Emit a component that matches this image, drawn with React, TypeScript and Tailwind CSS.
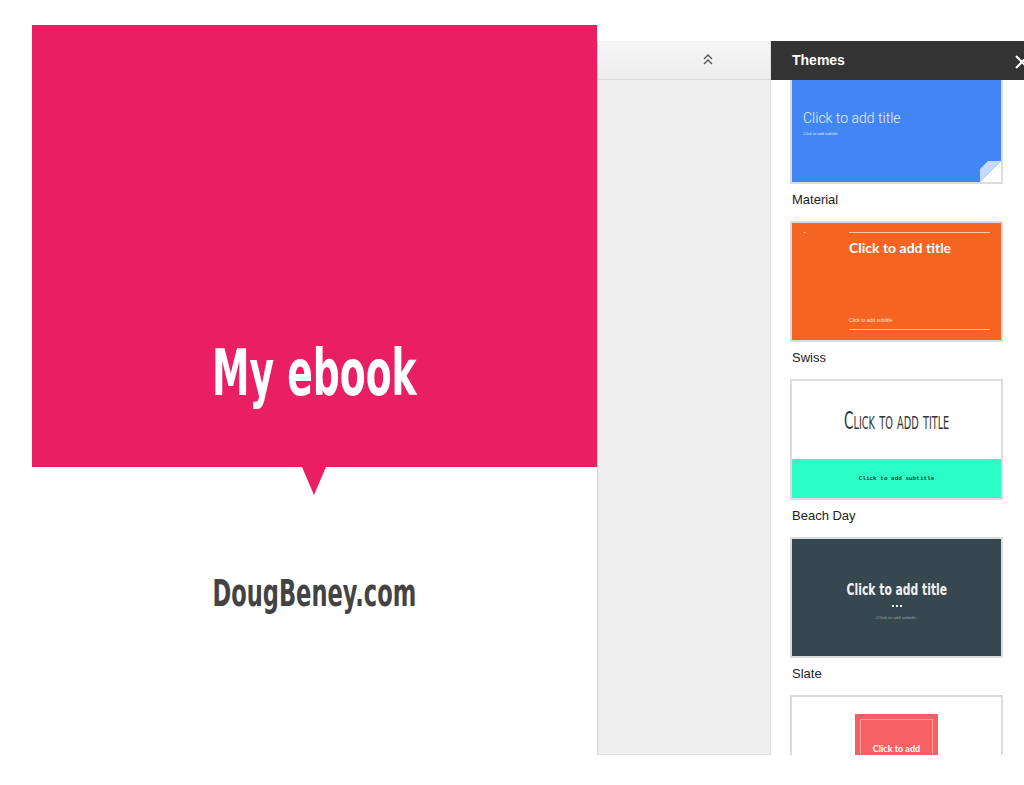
import React from "react";

const narrow = '"Liberation Sans Narrow", "DejaVu Sans Condensed", "Liberation Sans", sans-serif';

interface ThemeItemProps {
  name: string;
  children: React.ReactNode;
}

// Kartu tema: gambar kecil + nama
const ThemeItem: React.FC<ThemeItemProps> = ({ name, children }) => (
  <div className="w-[213px]">
    <div className="h-[121px] border-2 border-[#dcdcdc] overflow-hidden">{children}</div>
    <div className="h-[37px] pt-[8px] pl-[2px] text-[13px] leading-[16px] text-[#222]">{name}</div>
  </div>
);

const App: React.FC = () => {
  return (
    <div className="w-[1024px] h-[785px] bg-white flex overflow-hidden" style={{ fontFamily: '"Liberation Sans", Arial, sans-serif' }}>
      {/* Slide */}
      <div className="w-[597px] shrink-0 pl-[32px] pt-[25px]">
        <div className="h-[442px] bg-[#e91e63] flex justify-center pt-[316px]">
          <h1
            className="text-white text-[64px] leading-[64px] font-bold scale-x-[0.655] whitespace-nowrap"
            style={{ fontFamily: narrow }}
          >
            My ebook
          </h1>
        </div>
        <div className="flex justify-center">
          <svg width="24" height="28" viewBox="0 0 24 28" className="-ml-[2px]">
            <polygon points="0,0 24,0 12,28" fill="#e91e63" />
          </svg>
        </div>
        <div className="flex justify-center pt-[78px]">
          <div
            className="text-[#434343] text-[38px] leading-[40px] font-bold scale-x-[0.66] whitespace-nowrap"
            style={{ fontFamily: narrow }}
          >
            DougBeney.com
          </div>
        </div>
      </div>

      {/* Right side panels */}
      <div className="mt-[41px] h-[714px] flex shrink-0">
        {/* Gray filmstrip panel */}
        <div className="w-[173px] border-l border-[#d4d4d4] border-b border-b-[#e2e2e2] bg-[#eeeeee] flex flex-col">
          <div className="h-[39px] bg-gradient-to-b from-[#f6f6f6] to-[#ededed] border-b border-[#dadada] flex items-center justify-center pl-[48px]">
            <svg width="12" height="14" viewBox="0 0 12 14" fill="none" stroke="#555" strokeWidth="1.4">
              <polyline points="2,6 6,2 10,6" />
              <polyline points="2,11 6,7 10,11" />
            </svg>
          </div>
        </div>

        {/* Themes panel */}
        <div className="w-[254px] border-l border-[#e0e0e0] bg-white flex flex-col">
          <div className="h-[39px] bg-[#333333] flex items-center pl-[21px] justify-between">
            <span className="text-white font-bold text-[14px]">Themes</span>
            <svg width="16" height="16" viewBox="0 0 16 16" className="-mr-[6px] mt-[3px]" stroke="white" strokeWidth="2.2">
              <line x1="2" y1="2" x2="14" y2="14" />
              <line x1="14" y1="2" x2="2" y2="14" />
            </svg>
          </div>
          <div className="flex-1 overflow-hidden">
            <div className="-mt-[17px] pl-[19px]">
              <ThemeItem name="Material">
                <div className="relative h-full bg-[#4285f4] pl-[11px] pt-[45px]">
                  <div className="text-[#e8f0fe] text-[14px] leading-[16px]" style={{ fontFamily: "Roboto, sans-serif", fontWeight: 300 }}>
                    Click to add title
                  </div>
                  <div className="text-[#dfe9fd] text-[4px] leading-[6px] mt-[5px]">Click to add subtitle</div>
                  <svg width="21" height="21" viewBox="0 0 21 21" className="absolute right-0 bottom-0">
                    <polygon points="0,21 21,0 21,21" fill="#ffffff" />
                    <polygon points="0,21 21,0 8,0 0,8" fill="#c5d9fb" />
                  </svg>
                </div>
              </ThemeItem>
              <ThemeItem name="Swiss">
                <div className="h-full bg-[#f46524] flex">
                  <div className="w-[57px] pl-[11px] pt-[9px]">
                    <div className="w-[3px] h-[1px] bg-[#f9b08c]" />
                  </div>
                  <div className="flex-1 pr-[11px] pt-[9px] flex flex-col">
                    <div className="h-[1px] bg-[#f9c2a6]" />
                    <div className="text-white text-[14px] leading-[16px] font-bold mt-[7px]" style={{ fontFamily: "Lato, sans-serif" }}>
                      Click to add title
                    </div>
                    <div className="flex-1" />
                    <div className="text-[#fde0d0] text-[5px] leading-[6px]">Click to add subtitle</div>
                    <div className="h-[1px] bg-[#f9c2a6] mt-[6px] mb-[10px]" />
                  </div>
                </div>
              </ThemeItem>
              <ThemeItem name="Beach Day">
                <div className="h-full bg-white flex flex-col">
                  <div className="h-[78px] flex items-center justify-center pt-[2px]">
                    <span className="text-[#333] text-[25px] leading-[28px] scale-x-[0.6] whitespace-nowrap" style={{ fontFamily: narrow, fontVariant: "small-caps" }}>
                      Click to add title
                    </span>
                  </div>
                  <div className="flex-1 bg-[#2bffc6] flex items-center justify-center">
                    <span className="text-[#1f3b33] text-[6px] font-bold" style={{ fontFamily: '"Liberation Mono", monospace' }}>
                      Click to add subtitle
                    </span>
                  </div>
                </div>
              </ThemeItem>
              <ThemeItem name="Slate">
                <div className="h-full bg-[#37474f] flex flex-col items-center pt-[42px]">
                  <div className="text-[#f1f1f1] text-[15px] leading-[18px] font-bold scale-x-[0.8] whitespace-nowrap" style={{ fontFamily: narrow }}>
                    Click to add title
                  </div>
                  <div className="flex gap-[2px] mt-[6px]">
                    <span className="w-[2px] h-[2px] bg-white" />
                    <span className="w-[2px] h-[2px] bg-white" />
                    <span className="w-[2px] h-[2px] bg-white" />
                  </div>
                  <div className="text-[#9aa6ac] text-[5px] leading-[6px] mt-[8px]" style={{ fontFamily: '"Liberation Serif", serif' }}>
                    Click to add subtitle
                  </div>
                </div>
              </ThemeItem>
              <ThemeItem name="">
                <div className="h-full bg-white flex justify-center pt-[17px]">
                  <div className="w-[83px] h-[90px] bg-[#f65f64] p-[5px]">
                    <div className="h-full border border-[#fa9fa2] flex justify-center pt-[24px]">
                      <span className="text-white text-[9px] leading-[10px] font-bold" style={{ fontFamily: "Lato, sans-serif" }}>
                        Click to add
                      </span>
                    </div>
                  </div>
                </div>
              </ThemeItem>
            </div>
          </div>
        </div>
      </div>
    </div>
  );
};

export default App;
